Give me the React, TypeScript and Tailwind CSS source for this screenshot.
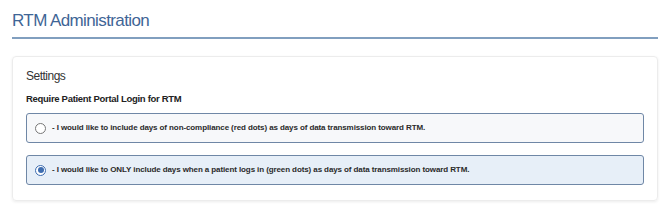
import { useState } from 'react';

const OPTIONS = [
  { id: 'all', label: '- I would like to include days of non-compliance (red dots) as days of data transmission toward RTM.' },
  { id: 'only', label: '- I would like to ONLY include days when a patient logs in (green dots) as days of data transmission toward RTM.' },
];

export default function App() {
  const [choice, setChoice] = useState('only');

  return (
    <div className="w-[670px] h-[215px] bg-white px-3 pt-[11px] font-['Liberation_Sans',Arial,sans-serif]">
      <h1 className="text-[17px] leading-[20px] tracking-[-0.6px] text-[#3f6596] pb-[6px] border-b-2 border-[#819fbf]">RTM Administration</h1>

      <div className="mt-[17px] w-[646px] h-[145px] rounded-[4px] border border-[#ececec] shadow-[0_1px_3px_rgba(0,0,0,0.08)] px-[13px] pt-[11px]">
        <div className="text-[12px] leading-[16px] tracking-[-0.5px] text-[#333]">Settings</div>
        <div className="mt-[9px] text-[9.5px] leading-[12px] tracking-[-0.3px] font-bold text-[#222]">Require Patient Portal Login for RTM</div>

        <div className="mt-[8px] flex flex-col gap-[12px] w-[618px]">
          {OPTIONS.map(o => {
            const active = choice === o.id;
            return (
              <label
                key={o.id}
                onClick={() => setChoice(o.id)}
                className={`flex items-center h-[30px] rounded-[3px] border-[1.5px] border-[#6f87a6] px-[8px] gap-[6px] cursor-pointer ${active ? 'bg-[#e7eff8]' : 'bg-[#f7f8fa]'}`}
              >
                <span className={`w-[11px] h-[11px] rounded-full border flex items-center justify-center bg-white ${active ? 'border-[#3e6db0]' : 'border-[#777]'}`}>
                  {active && <span className="w-[6px] h-[6px] rounded-full bg-[#3e6db0]" />}
                </span>
                <span className="text-[8px] font-bold tracking-[-0.1px] text-[#2a2a2a]">{o.label}</span>
              </label>
            );
          })}
        </div>
      </div>
    </div>
  );
}
